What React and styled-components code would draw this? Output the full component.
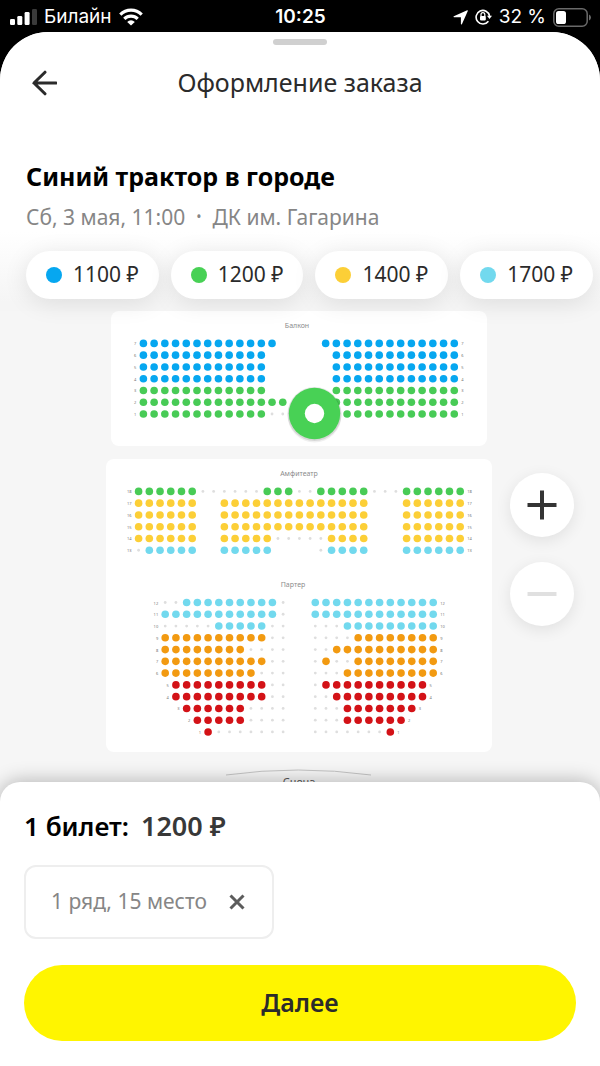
import React, { useState } from 'react';
import styled, { createGlobalStyle } from 'styled-components';

const GlobalStyle = createGlobalStyle`
  * {
    box-sizing: border-box;
  }

  body {
    margin: 0;
    background: #000;
    font-family: "Noto Sans", "Open Sans", sans-serif;
    color: #2b2b2b;
  }

  button {
    border: none;
    padding: 0;
    background: none;
    font: inherit;
    color: inherit;
    cursor: pointer;
  }
`;

const Screen = styled.div`
  display: flex;
  flex-direction: column;
  min-height: 100vh;
`;

const StatusBar = styled.div`
  display: grid;
  grid-template-columns: 1fr auto 1fr;
  align-items: center;
  height: 32px;
  padding: 2px 9px 0 10px;
  font-family: Inter, "Liberation Sans", sans-serif;
  font-size: 19px;
  line-height: 24px;
  color: #fff;
`;

const StatusGroup = styled.div`
  display: flex;
  align-items: center;
  gap: 7px;
  justify-content: ${(p) => (p.$end ? 'flex-end' : 'flex-start')};
`;

const Clock = styled.time`
  font-weight: 600;
`;

const Page = styled.main`
  flex: 1;
  display: flex;
  flex-direction: column;
  overflow: hidden;
  border-radius: 48px 48px 0 0;
  background: #f6f6f6;
`;

const Top = styled.div`
  position: relative;
  z-index: 1;
  padding-bottom: 12px;
  background: linear-gradient(to bottom, #fff 200px, #f5f5f5 270px);
`;

const Grabber = styled.div`
  width: 54px;
  height: 6px;
  margin: 7px auto 0;
  border-radius: 3px;
  background: #d0d0d0;
`;

const Header = styled.header`
  display: grid;
  grid-template-columns: 48px 1fr 48px;
  align-items: center;
  height: 76px;
  padding: 0 20px;
`;

const BackButton = styled.button`
  display: flex;
  align-items: center;
  justify-content: center;
  width: 48px;
  height: 48px;
`;

const PageTitle = styled.h1`
  margin: 0;
  padding-bottom: 2px;
  font-size: 25px;
  font-weight: 400;
  line-height: 36px;
  text-align: center;
`;

const EventInfo = styled.section`
  padding: 37px 26px 0;
`;

const EventName = styled.h2`
  margin: 0;
  font-size: 25px;
  font-weight: 700;
  line-height: 36px;
  color: #000;
`;

const EventMeta = styled.p`
  display: flex;
  gap: 11px;
  margin: 7px 0 0;
  font-size: 21px;
  line-height: 32px;
  color: #868686;
`;

const Bullet = styled.span`
  font-size: 14px;
`;

const PriceList = styled.div`
  display: flex;
  gap: 12px;
  padding: 18px 0 0 26px;
`;

const PriceChip = styled.button`
  display: flex;
  flex-shrink: 0;
  align-items: center;
  gap: 11px;
  height: 48px;
  padding: 0 20px 2px;
  border-radius: 24px;
  background: #fff;
  box-shadow: 0 4px 24px rgba(0, 0, 0, 0.1);
  font-size: 21px;
  line-height: 28px;
  white-space: nowrap;
`;

const PriceDot = styled.span`
  width: 16px;
  height: 16px;
  margin-top: 2px;
  border-radius: 50%;
  background: ${(p) => p.$color};
`;

const MapArea = styled.section`
  position: relative;
  flex: 1 0 460px;
  height: 460px;
  overflow: hidden;
`;

const Hall = styled.div`
  display: flex;
  flex-direction: column;
  padding: 0 108px 0 106px;
`;

const HallCard = styled.div`
  margin: ${(p) => (p.$inset ? '0 5px 13px' : '0 0 16px')};
  border-radius: 8px;
  background: #fff;
`;

const Drawing = styled.svg`
  display: block;
  width: 100%;
  height: auto;
  overflow: visible;
`;

const ZoomControls = styled.div`
  position: absolute;
  top: 162px;
  right: 26px;
  display: flex;
  flex-direction: column;
  gap: 25px;
`;

const ZoomButton = styled.button`
  display: flex;
  align-items: center;
  justify-content: center;
  width: 64px;
  height: 64px;
  border-radius: 50%;
  background: #fff;
  box-shadow: 0 4px 16px rgba(0, 0, 0, 0.09);
  color: #343434;

  &:disabled {
    color: #e0e0e0;
  }
`;

const Sheet = styled.section`
  position: relative;
  padding: 24px 24px 25px;
  border-radius: 20px 20px 0 0;
  margin-top: -20px;
  background: #fff;
  box-shadow: 0 0 20px rgba(0, 0, 0, 0.3);
`;

const Total = styled.div`
  display: flex;
  gap: 12px;
  font-size: 26px;
  font-weight: 600;
  line-height: 40px;
  color: #000;
`;

const TotalPrice = styled.span`
  font-size: 27px;
  color: #383838;
`;

const Ticket = styled.div`
  display: inline-flex;
  align-items: center;
  gap: 13px;
  height: 74px;
  margin-top: 19px;
  padding: 0 18px 2px 25px;
  border: 2px solid #eeeeee;
  border-radius: 12px;
  font-size: 21px;
  line-height: 32px;
  color: #868686;
`;

const RemoveButton = styled.button`
  display: flex;
  align-items: center;
  justify-content: center;
  width: 34px;
  height: 34px;
  padding-top: 2px;
`;

const NextButton = styled.button`
  display: block;
  width: 100%;
  height: 76px;
  margin-top: 26px;
  padding-bottom: 2px;
  border-radius: 38px;
  background: #fff500;
  font-size: 25px;
  font-weight: 600;
  line-height: 36px;
`;

const SEAT_COLORS = {
  b: '#06a7f0',
  g: '#48cb56',
  y: '#fccf37',
  c: '#72d9ee',
  o: '#f29a11',
  r: '#d31217',
};

const PRICES = [
  { value: '1100 ₽', color: '#06a7f0' },
  { value: '1200 ₽', color: '#48d155' },
  { value: '1400 ₽', color: '#fccf37' },
  { value: '1700 ₽', color: '#72d9ee' },
];

const STEP_X = 10.72;
const STEP_Y = 11.77;

// one character per place: letter = free seat, dot = taken, space = no seat
const BALCONY = [
  [7, 'bbbbbbbbbbbbb    bbbbbbbbbbbbb'],
  [6, 'bbbbbbbbbbbb      bbbbbbbbbbbb'],
  [5, 'bbbbbbbbbbbb      bbbbbbbbbbbb'],
  [4, 'bbbbbbbbbbbb      bbbbbbbbbbbb'],
  [3, 'gggggggggggg      gggggggggggg'],
  [2, 'gggggggggggggg    gggggggggggg'],
  [1, 'gggggggggggg..  g. ggggggggggg'],
];

const AMPHITHEATRE = [
  [18, 'gggggg......ggg..ggggg...gggggg'],
  [17, 'yyyyyy  yyyyyyyyyyyyyy   yyyyyy'],
  [16, 'yyyyyy  yyyyyyyyyyyyyy   yyyyyy'],
  [15, 'yyyyyy  yyyyyyyyyyyyyy   yyyyyy'],
  [14, 'yyyyyy  yyyyy.....yyyy   yyyyyy'],
  [13, '.ccccc  ccccc    .cccc   cccccc'],
];

const PARTERRE = [
  [12, '..ccccccccc.  cccccccccccc'],
  [11, 'ccccccccccc.  cccccccccccc'],
  [10, '.....ccccc..  ...ccccccccc'],
  [9, 'oooooooooo..  ....oooooooo'],
  [8, 'oooooooo....  ..oooooooooo'],
  [7, 'oooooooooo..  .o..oooooooo'],
  [6, 'ooooooooo...  ...ooooooooo'],
  [5, ' rrrrrrrrr..  .rrrrrrrrrr'],
  [4, ' rrrrrrrrr..  ..rrrrrrrrr'],
  [3, '  rrrrrr....  ...rrrrrrr'],
  [2, '   rrrrr....  ...rrrrrr'],
  [1, '    r.......  .......r'],
];

function Block({ title, titleX, titleY, x, y, rows }) {
  return (
    <g>
      <text x={titleX} y={titleY} fontSize="7" fill="#8c8c8c" textAnchor="middle">{title}</text>
      {rows.map(([number, seats], row) => {
        const cy = y + row * STEP_Y;
        const first = seats.length - seats.trimStart().length;
        return (
          <g key={number}>
            <text x={x + first * STEP_X - 7} y={cy + 2} fontSize="4" fill="#777" textAnchor="end">{number}</text>
            {seats.split('').map((seat, i) => {
              if (seat === ' ') return null;
              const taken = seat === '.';
              return (
                <circle
                  key={i}
                  cx={x + i * STEP_X}
                  cy={cy}
                  r={taken ? 1.4 : 3.8}
                  fill={taken ? '#dedede' : SEAT_COLORS[seat]}
                />
              );
            })}
            <text x={x + (seats.length - 1) * STEP_X + 7} y={cy + 2} fontSize="4" fill="#777">{number}</text>
          </g>
        );
      })}
    </g>
  );
}

function SignalIcon() {
  return (
    <svg width="27" height="18" viewBox="0 0 27 18" fill="#fff">
      <rect x="0" y="11" width="5" height="6" rx="1.3" />
      <rect x="7.3" y="8" width="5" height="9" rx="1.3" />
      <rect x="14.6" y="4" width="5" height="13" rx="1.3" />
      <rect x="22" y="1" width="5" height="16" rx="1.3" fill="#3a3a3a" />
    </svg>
  );
}

function WifiIcon() {
  return (
    <svg width="24" height="18" viewBox="0 0 24 18" fill="none" stroke="#fff" strokeWidth="3.2">
      <path d="M1.3 6.6 A15.2 15.2 0 0 1 22.7 6.6" />
      <path d="M5.3 10.8 A9.5 9.5 0 0 1 18.7 10.8" />
      <path d="M12 17.6 L8.2 13.9 A5.4 5.4 0 0 1 15.8 13.9 Z" fill="#fff" stroke="none" />
    </svg>
  );
}

function LocationIcon() {
  return (
    <svg width="15" height="15" viewBox="0 0 15 15" fill="#fff">
      <path d="M14.2 0.2 Q15 0 14.8 0.9 L8.9 14.2 Q8.3 15 7.9 14.1 V7.2 H0.9 Q0 6.8 0.8 6.2 Z" />
    </svg>
  );
}

function RotationLockIcon() {
  return (
    <svg width="17" height="16" viewBox="0 0 17 16" fill="none" stroke="#fff">
      <path d="M13.4 12.2 A6.8 6.8 0 1 1 14.6 7" strokeWidth="1.6" />
      <path d="M12 6.8 H17 L14.5 10 Z" fill="#fff" stroke="none" />
      <path d="M6 7 V5.6 A1.9 1.9 0 0 1 9.8 5.6 V7" strokeWidth="1.2" />
      <rect x="5" y="7" width="5.8" height="4.4" rx="0.8" fill="#fff" stroke="none" />
    </svg>
  );
}

function BatteryIcon() {
  return (
    <svg width="38" height="19" viewBox="0 0 38 19">
      <rect x="0.8" y="0.8" width="33.4" height="17.4" rx="5" fill="none" stroke="#6a6a6a" strokeWidth="1.5" />
      <rect x="3" y="3" width="10" height="13" rx="2.6" fill="#fff" />
      <path d="M36 6.4 Q38 7.4 38 9.5 Q38 11.6 36 12.6 Z" fill="#6a6a6a" />
    </svg>
  );
}

function App() {
  const [hasTicket, setHasTicket] = useState(true);

  return (
    <Screen>
      <GlobalStyle />
      <StatusBar>
        <StatusGroup>
          <SignalIcon />
          <span>Билайн</span>
          <WifiIcon />
        </StatusGroup>
        <Clock>10:25</Clock>
        <StatusGroup $end>
          <LocationIcon />
          <RotationLockIcon />
          <span>32 %</span>
          <BatteryIcon />
        </StatusGroup>
      </StatusBar>

      <Page>
        <Top>
          <Grabber />
          <Header>
            <BackButton type="button" aria-label="Назад">
              <svg width="26" height="26" viewBox="0 0 26 26" fill="none" stroke="#2b2b2b" strokeWidth="3" strokeLinecap="round">
                <path d="M25 13 H3 M14 2.2 L3 13 L14 23.8" />
              </svg>
            </BackButton>
            <PageTitle>Оформление заказа</PageTitle>
          </Header>

          <EventInfo>
            <EventName>Синий трактор в городе</EventName>
            <EventMeta>
              <span>Сб, 3 мая, 11:00</span>
              <Bullet>•</Bullet>
              <span>ДК им. Гагарина</span>
            </EventMeta>
          </EventInfo>

          <PriceList>
            {PRICES.map((price) => (
              <PriceChip key={price.value} type="button">
                <PriceDot $color={price.color} />
                {price.value}
              </PriceChip>
            ))}
          </PriceList>
        </Top>

        <MapArea>
          <Hall>
            <HallCard $inset>
              <Drawing viewBox="0 0 376 135">
                <Block title="Балкон" titleX={186} titleY={17} x={32.4} y={32.4} rows={BALCONY} />
                {hasTicket &&
                  <g>
                    <circle cx="203.5" cy="104.5" r="27" fill="#000" opacity="0.06" />
                    <circle cx="203.5" cy="103" r="27" fill="#000" opacity="0.1" />
                    <circle cx="203.5" cy="102.5" r="25.7" fill="#48d155" />
                    <circle cx="203.5" cy="102.5" r="9.7" fill="#fff" />
                  </g>
                }
              </Drawing>
            </HallCard>
            <HallCard>
              <Drawing viewBox="0 0 386 293">
                <Block title="Амфитеатр" titleX={193} titleY={17} x={32.6} y={32.4} rows={AMPHITHEATRE} />
                <Block title="Партер" titleX={187} titleY={128} x={59.2} y={143.5} rows={PARTERRE} />
              </Drawing>
            </HallCard>
            <Drawing viewBox="0 0 386 40">
              <path d="M120 7 Q192 -3 265 7" fill="none" stroke="#c4c4c4" strokeWidth="1" />
              <text x="193" y="18" fontSize="11" fill="#555" textAnchor="middle">Сцена</text>
            </Drawing>
          </Hall>

          <ZoomControls>
            <ZoomButton type="button" aria-label="Приблизить">
              <svg width="30" height="30" viewBox="0 0 30 30" fill="none" stroke="currentColor" strokeWidth="4">
                <path d="M15 0.5 V29.5 M0.5 15 H29.5" />
              </svg>
            </ZoomButton>
            <ZoomButton type="button" aria-label="Отдалить" disabled>
              <svg width="30" height="30" viewBox="0 0 30 30" fill="none" stroke="currentColor" strokeWidth="4">
                <path d="M0.5 15 H29.5" />
              </svg>
            </ZoomButton>
          </ZoomControls>
        </MapArea>

        <Sheet>
          <Total>
            <span>1 билет:</span>
            <TotalPrice>1200 ₽</TotalPrice>
          </Total>
          {hasTicket &&
            <Ticket>
              1 ряд, 15 место
              <RemoveButton type="button" aria-label="Убрать билет" onClick={() => setHasTicket(false)}>
                <svg width="16" height="16" viewBox="0 0 16 16" fill="none" stroke="#5c5c5c" strokeWidth="3">
                  <path d="M1.5 1.5 L14.5 14.5 M14.5 1.5 L1.5 14.5" />
                </svg>
              </RemoveButton>
            </Ticket>
          }
          <NextButton type="button">Далее</NextButton>
        </Sheet>
      </Page>
    </Screen>
  );
}

export default App;
